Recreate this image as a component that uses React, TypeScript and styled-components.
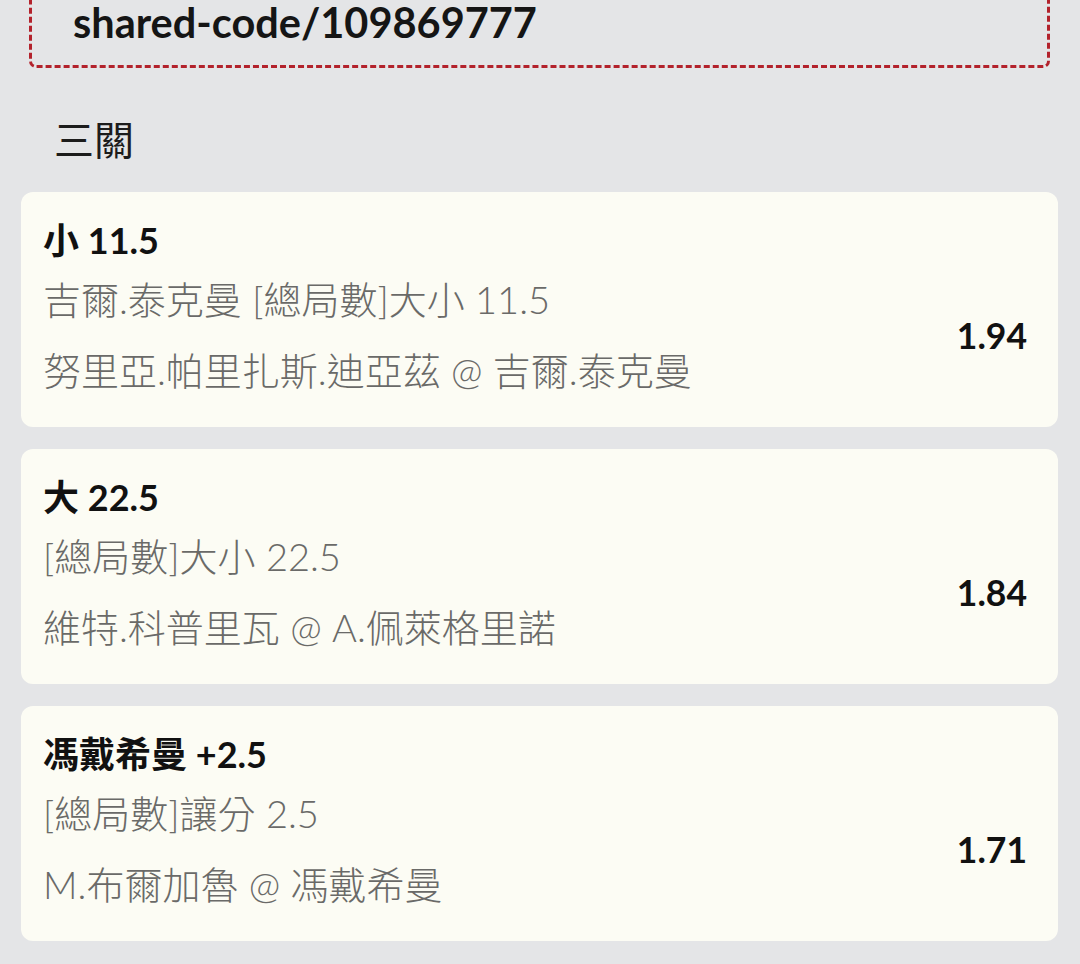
import React from 'react';
import styled, { createGlobalStyle } from 'styled-components';

const GlobalStyle = createGlobalStyle`
  html, body {
    margin: 0;
    padding: 0;
    background: #e4e5e7;
  }
  body {
    font-family: Lato, "Noto Sans CJK TC", sans-serif;
    color: #141414;
    overflow: hidden;
  }
`;

interface Leg {
  pick: string;
  market: string;
  match: string;
  odds: string;
}

const legs: Leg[] = [
  { pick: '小 11.5', market: '吉爾.泰克曼 [總局數]大小 11.5', match: '努里亞.帕里扎斯.迪亞茲 @ 吉爾.泰克曼', odds: '1.94' },
  { pick: '大 22.5', market: '[總局數]大小 22.5', match: '維特.科普里瓦 @ A.佩萊格里諾', odds: '1.84' },
  { pick: '馮戴希曼 +2.5', market: '[總局數]讓分 2.5', match: 'M.布爾加魯 @ 馮戴希曼', odds: '1.71' }
];

const Page = styled.div`
  display: flex;
  flex-direction: column;
  padding: 0 22px 0 21px;
`;

const CodeBox = styled.div`
  margin: -30px 8px 0 8px;
  padding: 26px 40px 20px 41px;
  border: 3px dashed #b3222c;
  border-radius: 7px;
  font-size: 41.5px;
  line-height: 46px;
  font-weight: 700;
  color: #151515;
`;

const SectionTitle = styled.h2`
  margin: 47px 0 27px 33px;
  font-size: 40px;
  line-height: 50px;
  font-weight: 400;
  color: #1c1c1c;
`;

const List = styled.div`
  display: flex;
  flex-direction: column;
  gap: 22px;
`;

const Card = styled.div`
  display: flex;
  flex-direction: column;
  height: 235px;
  box-sizing: border-box;
  padding: 24px 31px 22px 22px;
  background: #fcfcf4;
  border-radius: 12px;
`;

const Pick = styled.div`
  font-size: 36px;
  line-height: 48px;
  font-weight: 700;
  color: #111;
`;

const Body = styled.div`
  display: flex;
  align-items: center;
  justify-content: space-between;
`;

const Lines = styled.div`
  display: flex;
  flex-direction: column;
`;

const Line = styled.div`
  font-size: 38px;
  line-height: 71px;
  font-weight: 300;
  color: #6a6a68;
  white-space: nowrap;
`;

const Odds = styled.div`
  font-size: 35.5px;
  font-weight: 700;
  color: #111;
`;

export default function App() {
  return (
    <>
      <GlobalStyle />
      <Page>
        <CodeBox>shared-code/109869777</CodeBox>
        <SectionTitle>三關</SectionTitle>
        <List>
          {legs.map((leg, idx) => (
            <Card key={idx}>
              <Pick>{leg.pick}</Pick>
              <Body>
                <Lines>
                  <Line>{leg.market}</Line>
                  <Line>{leg.match}</Line>
                </Lines>
                <Odds>{leg.odds}</Odds>
              </Body>
            </Card>
          ))}
        </List>
      </Page>
    </>
  );
}
